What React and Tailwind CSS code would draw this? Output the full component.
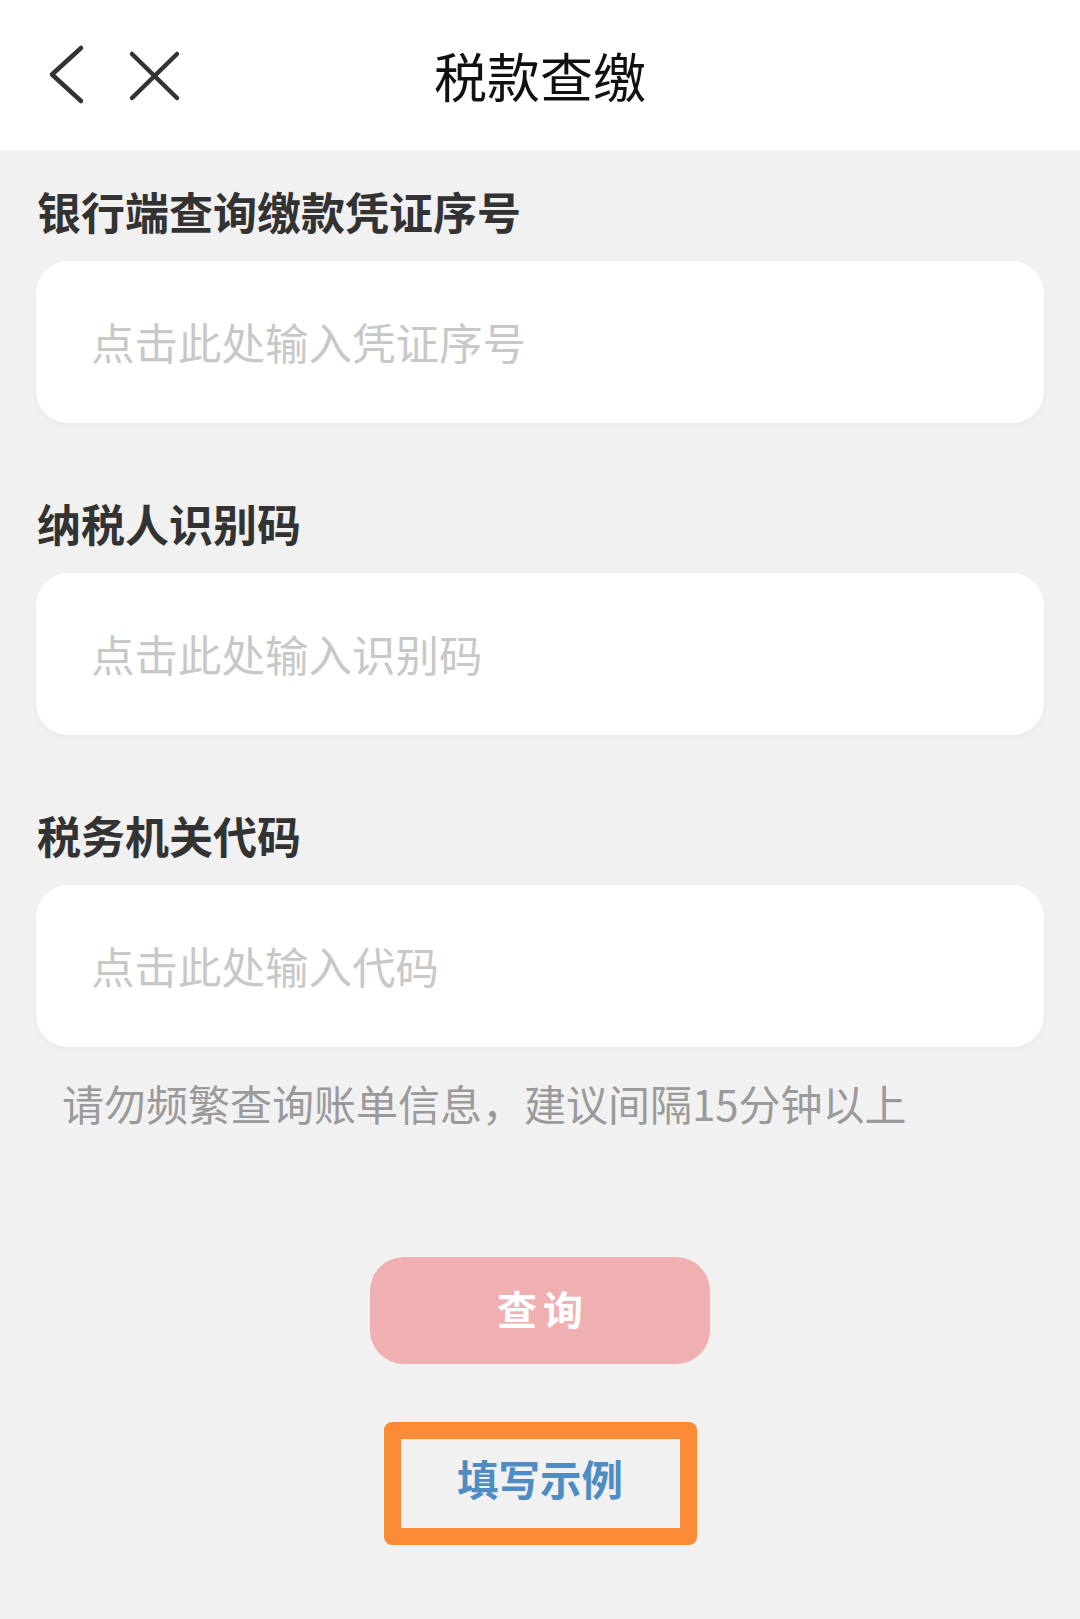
import React from "react";

const font = { fontFamily: '"Noto Sans CJK SC", "Noto Sans", sans-serif' };

function Field({ label, placeholder }) {
  return (
    <div className="flex flex-col">
      <div className="pl-[37px] text-[44px] leading-[50px] font-bold text-[#333333]">{label}</div>
      <div className="mx-[36px] mt-[25px] h-[162px] rounded-[32px] bg-white shadow-[0_2px_6px_rgba(0,0,0,0.04)] flex items-center pl-[55px]">
        <span className="text-[43.5px] leading-[50px] text-[#c8c8c8]">{placeholder}</span>
      </div>
    </div>
  );
}

export default function App() {
  return (
    <div className="w-[1080px] min-h-[1619px] bg-[#f1f1f1]" style={font}>
      <div className="h-[150px] bg-white grid grid-cols-[1fr_auto_1fr] items-center">
        <div className="flex items-center">
          <svg width="200" height="150" viewBox="0 0 200 150">
            <polyline points="81,48 52,74.5 81,101" fill="none" stroke="#333" strokeWidth="4.5" strokeLinecap="round" strokeLinejoin="round" />
            <line x1="132" y1="54" x2="177" y2="98" stroke="#333" strokeWidth="4.5" strokeLinecap="round" />
            <line x1="177" y1="54" x2="132" y2="98" stroke="#333" strokeWidth="4.5" strokeLinecap="round" />
          </svg>
        </div>
        <div className="text-[53px] leading-[60px] text-[#111111]">税款查缴</div>
        <div />
      </div>

      <div className="pt-[36px] flex flex-col gap-[75px]">
        <Field label="银行端查询缴款凭证序号" placeholder="点击此处输入凭证序号" />
        <Field label="纳税人识别码" placeholder="点击此处输入识别码" />
        <Field label="税务机关代码" placeholder="点击此处输入代码" />
      </div>

      <div className="pl-[62px] mt-[31px] text-[42px] leading-[50px] text-[#9a9a9a]">
        请勿频繁查询账单信息，建议间隔15分钟以上
      </div>

      <div className="flex flex-col items-center">
        <div className="mt-[129px] w-[340px] h-[107px] rounded-[34px] bg-[#f0b0b1] flex items-center justify-center">
          <span className="mb-[6px] text-[40px] leading-[48px] font-bold text-white tracking-[6px] pl-[6px]">查询</span>
        </div>
        <div className="mt-[58px] w-[313px] h-[123px] rounded-[8px] border-[17px] border-[#fb8b37] flex items-center justify-center">
          <span className="mb-[12px] text-[41.5px] leading-[48px] font-bold text-[#4f8cc4]">填写示例</span>
        </div>
      </div>
    </div>
  );
}
